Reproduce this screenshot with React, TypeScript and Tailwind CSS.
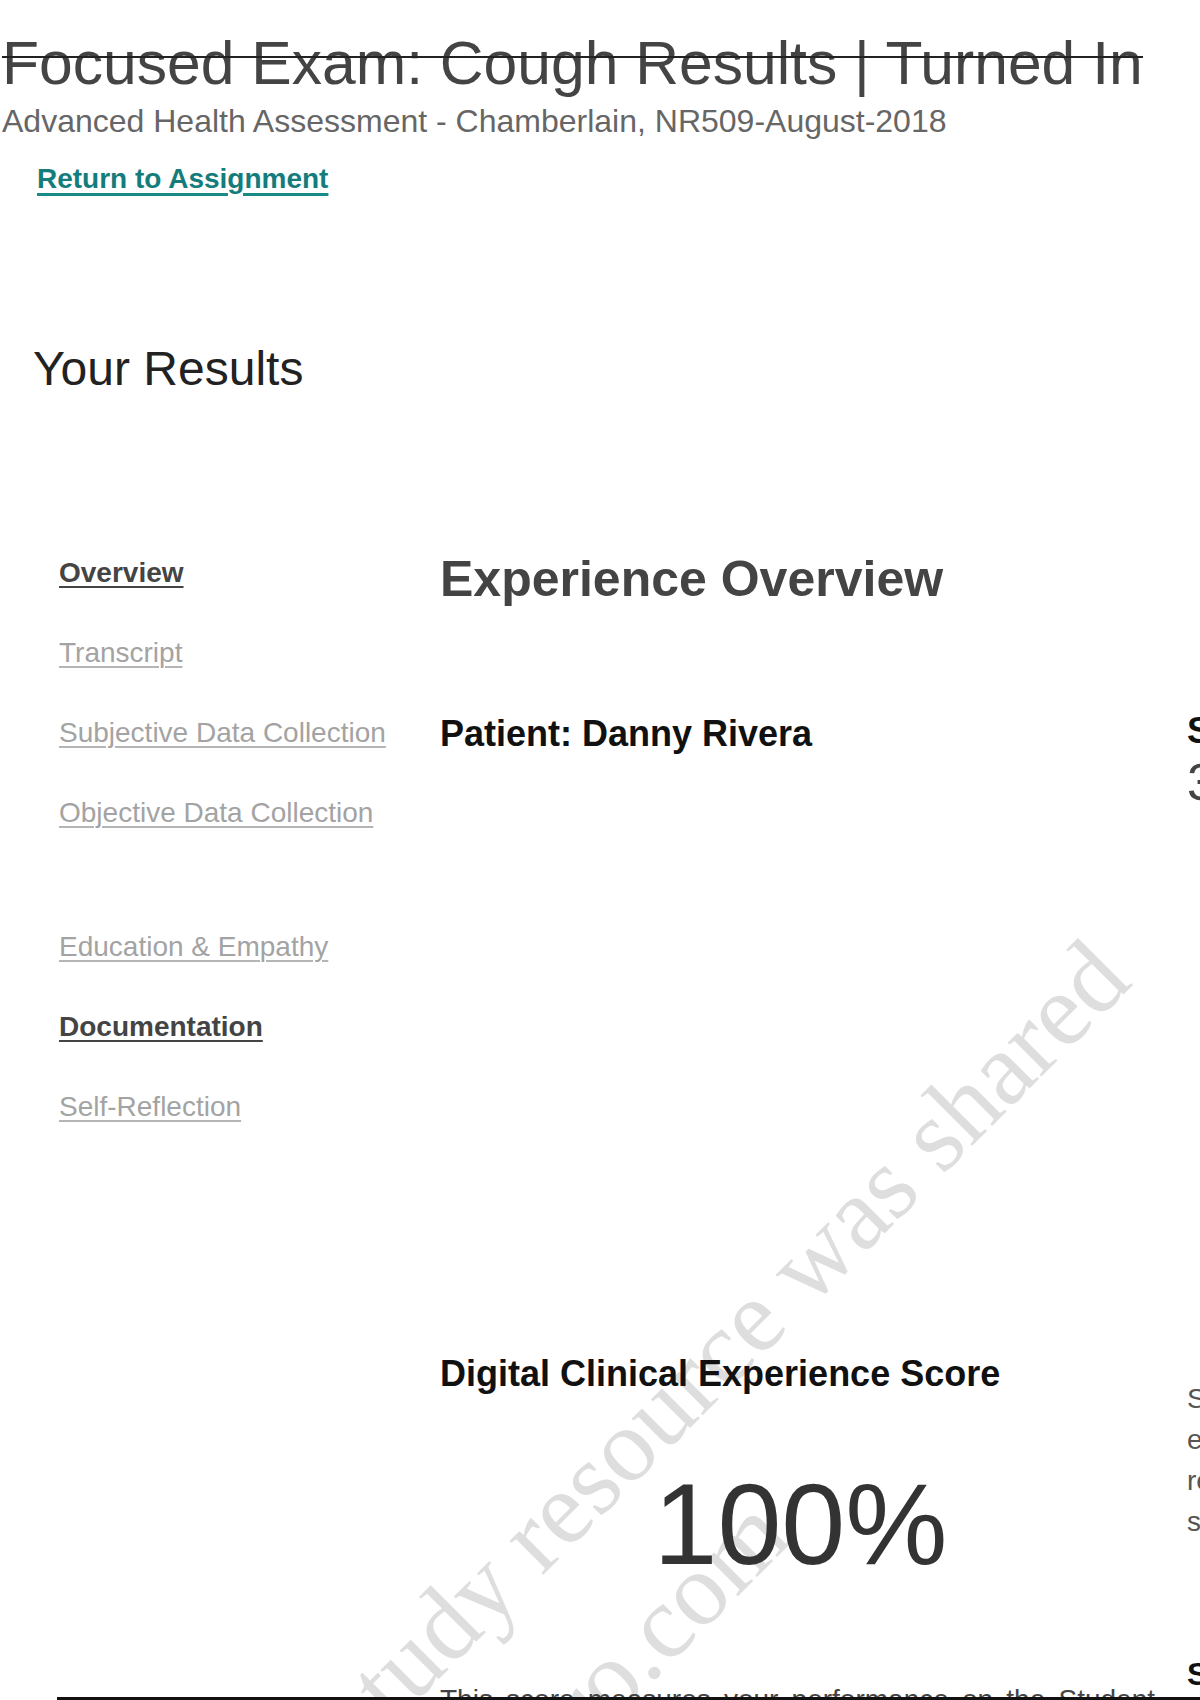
import React from "react";

const navItems = [
  { label: "Overview", active: true },
  { label: "Transcript", active: false },
  { label: "Subjective Data Collection", active: false },
  { label: "Objective Data Collection", active: false },
  { label: "Education & Empathy", active: false, gap: true },
  { label: "Documentation", active: true },
  { label: "Self-Reflection", active: false },
];

export default function App() {
  return (
    <div className="relative w-[1200px] h-[1700px] overflow-hidden bg-white font-['Liberation_Sans',Arial,sans-serif]">
      {/* watermark */}
      <div className="pointer-events-none absolute inset-0 z-0 font-['Liberation_Serif',serif] text-[104px] leading-none text-[#dedede] whitespace-nowrap">
        <div className="absolute left-[215px] top-[1816px] origin-[0_87px] rotate-[-45deg]">
          This study resource was shared
        </div>
        <div className="absolute left-[185px] top-[2062px] origin-[0_87px] rotate-[-45deg]">
          via CourseHero.com
        </div>
      </div>

      <div className="relative z-10">
        {/* header */}
        <div className="pt-[33px] pl-[2px]">
          <div className="relative inline-block text-[60.6px] leading-none text-[#444] whitespace-nowrap">
            Focused Exam: Cough Results | Turned In
            <span className="absolute left-0 right-0 top-[23px] h-[2px] bg-[#222]" />
          </div>
          <div className="mt-[11px] text-[32px] leading-none text-[#666] whitespace-nowrap">
            Advanced Health Assessment - Chamberlain, NR509-August-2018
          </div>
        </div>
        <div className="mt-[28px] pl-[37px]">
          <a className="text-[28px] leading-none font-bold text-[#147d7b] underline decoration-[3px] underline-offset-[5px] decoration-[#1a8a86]">
            Return to Assignment
          </a>
        </div>

        <h1 className="mt-[150px] pl-[33px] text-[48px] leading-none text-[#222]">
          Your Results
        </h1>

        <div className="mt-[162px] flex pl-[59px]">
          {/* side nav */}
          <nav className="w-[381px] shrink-0 pt-[4px] flex flex-col items-start gap-[52px]">
            {navItems.map((item) => (
              <a
                key={item.label}
                className={
                  "text-[28px] leading-none whitespace-nowrap underline underline-offset-[4px] decoration-2 " +
                  (item.active
                    ? "font-bold text-[#444] decoration-[#444] "
                    : "text-[#a3a3a3] decoration-[#b5b5b5] ") +
                  (item.gap ? "mt-[54px]" : "")
                }
              >
                {item.label}
              </a>
            ))}
          </nav>

          {/* main column */}
          <div className="w-[715px] shrink-0 flex flex-col">
            <h2 className="-mt-[1px] text-[50px] leading-none font-bold text-[#444] whitespace-nowrap">
              Experience Overview
            </h2>
            <div className="mt-[112px] text-[36px] leading-none font-bold text-[#111] whitespace-nowrap">
              Patient: Danny Rivera
            </div>
            <div className="mt-[604px] text-[36px] leading-none font-bold text-[#111] whitespace-nowrap">
              Digital Clinical Experience Score
            </div>
            <div className="mt-[75px] pl-[6px] text-center text-[115px] leading-none text-[#333]">
              100%
            </div>
            <p className="mt-[97px] text-[28px] leading-[41px] text-[#444] text-justify">
              This score measures your performance on the Student Performance
              Index in this assignment and compares it to the expectations of
              your instructor.
            </p>
          </div>

          {/* right column */}
          <div className="ml-[32px] w-[400px] shrink-0 flex flex-col">
            <div className="mt-[158px] text-[36px] leading-none font-bold text-[#111] whitespace-nowrap">
              Student Performance Index
            </div>
            <div className="mt-[7px] text-[52px] leading-none text-[#444] whitespace-nowrap">
              33 of 35 (94.3%)
            </div>
            <div className="mt-[570px] text-[28px] leading-[41px] text-[#555] whitespace-nowrap">
              <div>Shadow Health's Student</div>
              <div>evaluation of your</div>
              <div>response to the patient's</div>
              <div>subjective findings.</div>
            </div>
            <div className="mt-[116px] text-[32px] leading-none font-bold text-[#111] whitespace-nowrap">
              Subjective Data Collection
            </div>
          </div>
        </div>
      </div>

      {/* page edge line */}
      <div className="absolute bottom-0 left-[57px] right-0 z-20 h-[3px] bg-[#111]" />
    </div>
  );
}
